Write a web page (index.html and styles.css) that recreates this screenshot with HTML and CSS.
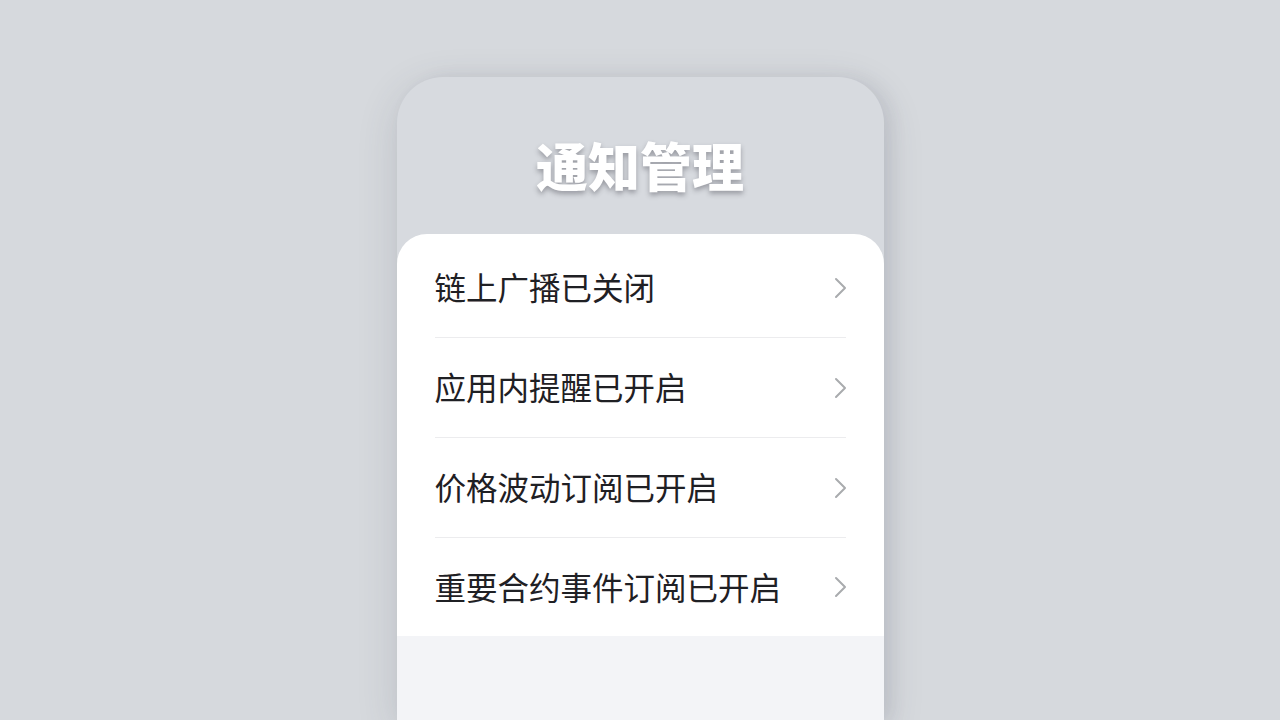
FILE: index.html
```html
<!DOCTYPE html>
<html lang="zh-CN">
<head>
<meta charset="utf-8">
<title>通知管理</title>
<link rel="stylesheet" href="styles.css">
</head>
<body>
<div class="phone">
  <header class="header"><h1 class="title">通知管理</h1></header>
  <ul class="list">
    <li class="row"><span class="label">链上广播已关闭</span><svg class="chev" viewBox="0 0 16 24" width="16" height="24"><path d="M4 3 L13 12 L4 21" fill="none" stroke="#a9abae" stroke-width="2" stroke-linecap="round" stroke-linejoin="round"/></svg></li>
    <li class="row"><span class="label">应用内提醒已开启</span><svg class="chev" viewBox="0 0 16 24" width="16" height="24"><path d="M4 3 L13 12 L4 21" fill="none" stroke="#a9abae" stroke-width="2" stroke-linecap="round" stroke-linejoin="round"/></svg></li>
    <li class="row"><span class="label">价格波动订阅已开启</span><svg class="chev" viewBox="0 0 16 24" width="16" height="24"><path d="M4 3 L13 12 L4 21" fill="none" stroke="#a9abae" stroke-width="2" stroke-linecap="round" stroke-linejoin="round"/></svg></li>
    <li class="row"><span class="label">重要合约事件订阅已开启</span><svg class="chev" viewBox="0 0 16 24" width="16" height="24"><path d="M4 3 L13 12 L4 21" fill="none" stroke="#a9abae" stroke-width="2" stroke-linecap="round" stroke-linejoin="round"/></svg></li>
  </ul>
  <div class="footer"></div>
</div>
</body>
</html>
```
FILE: styles.css
```css
html, body {
  margin: 0;
  padding: 0;
  height: 100%;
  overflow: hidden;
}
body {
  background: #d6d9dd;
  font-family: "Noto Sans CJK SC", "Noto Sans", sans-serif;
  display: flex;
  justify-content: center;
}
.phone {
  margin-top: 77px;
  width: 487px;
  height: 643px;
  background: #d7dadf;
  border-radius: 46px 46px 0 0;
  box-shadow: 0 10px 40px rgba(60, 70, 85, 0.16), 8px 0 16px rgba(60, 70, 85, 0.08);
  display: flex;
  flex-direction: column;
  overflow: hidden;
}
.header {
  height: 157px;
  display: flex;
  justify-content: center;
  align-items: flex-start;
}
.title {
  margin: 56px 0 0;
  font-size: 52px;
  line-height: 64px;
  font-weight: 900;
  color: #ffffff;
  letter-spacing: 0;
  text-shadow: 0 3px 5px rgba(60, 60, 70, 0.4);
}
.list {
  list-style: none;
  margin: 0;
  padding: 4px 0 0;
  background: #ffffff;
  border-radius: 30px 30px 0 0;
}
.row {
  margin: 0 38px;
  height: 99px;
  display: flex;
  align-items: center;
  justify-content: space-between;
  border-bottom: 1px solid #ececee;
}
.row:last-child {
  border-bottom: none;
  height: 98px;
}
.label {
  font-size: 31.5px;
  color: #1f2024;
  line-height: 40px;
  padding-bottom: 3px;
}
.chev {
  display: block;
  margin-right: -2px;
}
.footer {
  flex: 1;
  background: #f3f4f7;
}
```
